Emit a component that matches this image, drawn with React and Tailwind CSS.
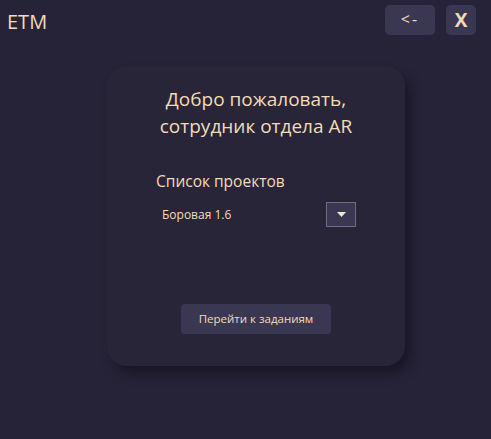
export default function App() {
  return (
    <div className="w-[491px] h-[439px] bg-[#262338] text-[#f3dcb4] font-['Open_Sans',sans-serif] flex flex-col overflow-hidden">
      {/* Title bar */}
      <div className="flex items-start justify-between pl-[7px] pr-[15px] pt-[5px] h-[66px]">
        <div className="text-[20px] leading-[30px] mt-[2px]">ETM</div>
        <div className="flex gap-[11px]">
          <button className="w-[50px] h-[30px] rounded-[5px] bg-[#3a3753] text-[#f3dcb4] text-[16px] tracking-[2px] leading-none pb-[2px]">&lt;-</button>
          <button className="w-[30px] h-[30px] rounded-[5px] bg-[#3a3753] text-[#f3dcb4] text-[19px] font-bold leading-none">X</button>
        </div>
      </div>

      {/* Card */}
      <div className="ml-[107px] w-[298px] h-[300px] rounded-[20px] bg-[#282539] shadow-[6px_8px_12px_rgba(0,0,0,0.35)] flex flex-col items-center pt-[20px]">
        <h1 className="text-[19px] leading-[27px] text-center">
          Добро пожаловать,
          <br />
          сотрудник отдела AR
        </h1>

        <div className="w-full px-[49px] mt-[31px]">
          <div className="text-[15.5px] leading-[20px]">Список проектов</div>
          <div className="flex items-center justify-between mt-[11px] pl-[6px]">
            <span className="text-[12px]">Боровая 1.6</span>
            <button className="w-[30px] h-[25px] bg-[#3a3753] border border-[#6e6c80] flex items-center justify-center">
              <svg width="9" height="5" viewBox="0 0 9 5">
                <path d="M0 0 H9 L4.5 5 Z" fill="#f7e6c8" />
              </svg>
            </button>
          </div>
        </div>

        <button className="mt-[77px] w-[150px] h-[30px] rounded-[4px] bg-[#3a3753] text-[11.5px] text-[#f3dcb4]">
          Перейти к заданиям
        </button>
      </div>
    </div>
  );
}
